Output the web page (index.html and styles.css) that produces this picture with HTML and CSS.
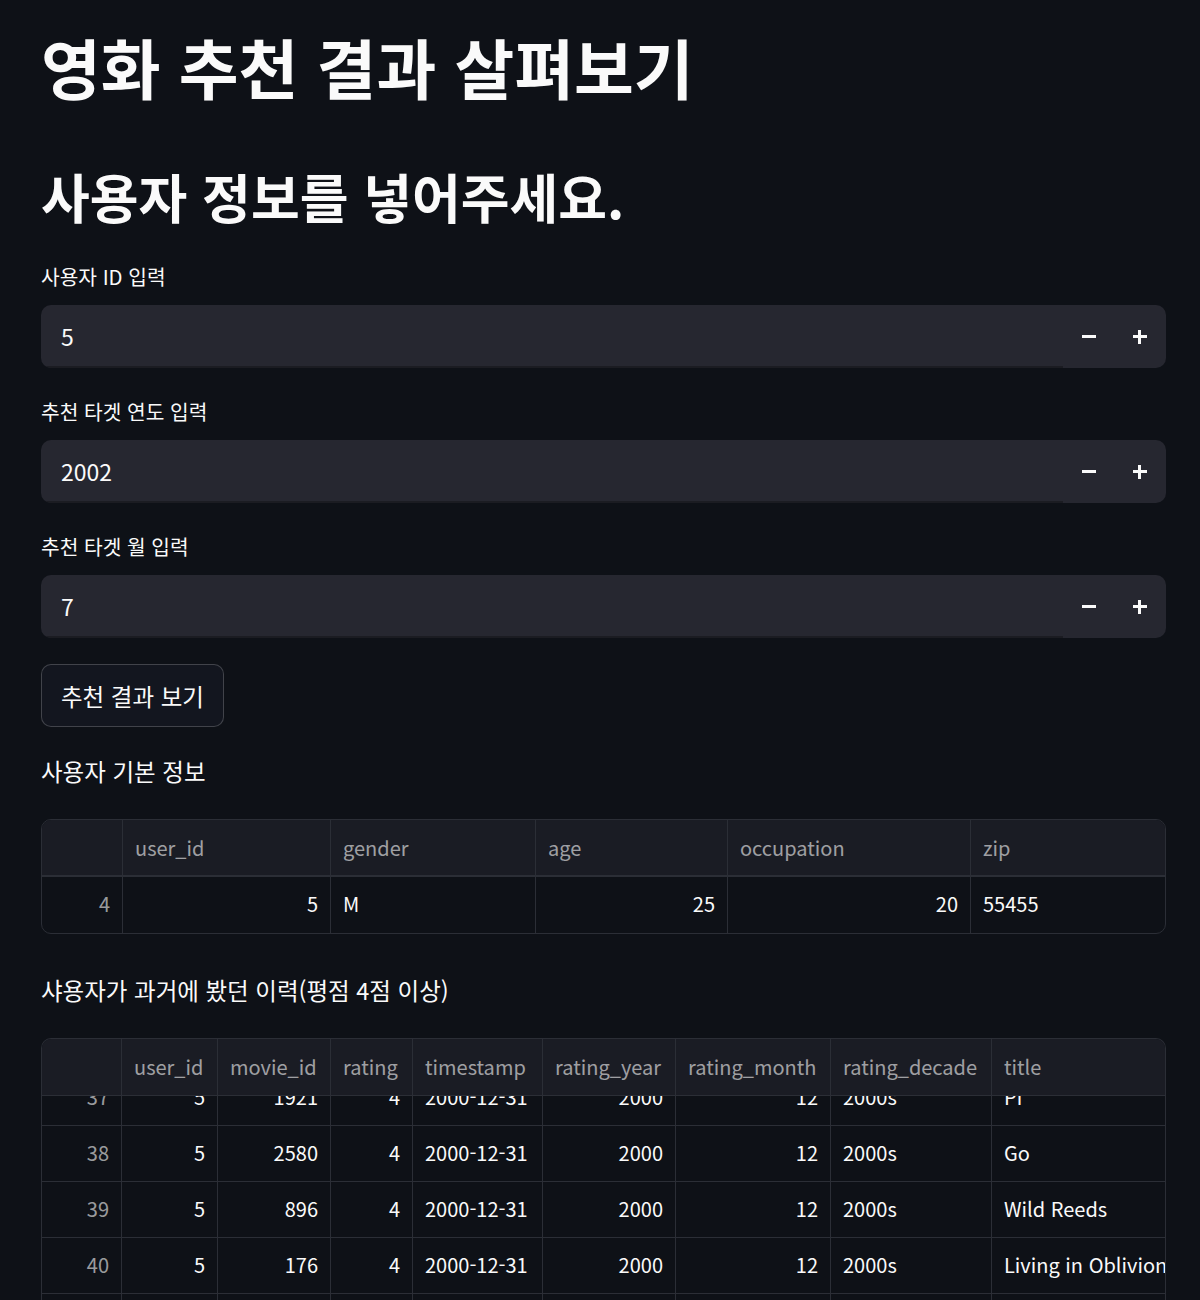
FILE: index.html
```html
<!DOCTYPE html>
<html lang="ko">
<head>
<meta charset="utf-8">
<title>영화 추천 결과 살펴보기</title>
<link rel="stylesheet" href="styles.css">
</head>
<body>
<main class="main">
  <h1 class="title">영화 추천 결과 살펴보기</h1>
  <h2 class="subtitle">사용자 정보를 넣어주세요.</h2>

  <div class="field">
    <label class="label">사용자 ID 입력</label>
    <div class="numinput">
      <div class="numinput-value">5</div>
      <div class="numinput-btn"><span class="minus"></span></div>
      <div class="numinput-btn"><span class="plus"></span></div>
    </div>
  </div>

  <div class="field">
    <label class="label">추천 타겟 연도 입력</label>
    <div class="numinput">
      <div class="numinput-value">2002</div>
      <div class="numinput-btn"><span class="minus"></span></div>
      <div class="numinput-btn"><span class="plus"></span></div>
    </div>
  </div>

  <div class="field">
    <label class="label">추천 타겟 월 입력</label>
    <div class="numinput">
      <div class="numinput-value">7</div>
      <div class="numinput-btn"><span class="minus"></span></div>
      <div class="numinput-btn"><span class="plus"></span></div>
    </div>
  </div>

  <button class="btn">추천 결과 보기</button>

  <p class="section">사용자 기본 정보</p>

  <div class="df df-user">
    <div class="df-row df-head">
      <div class="c idx"></div>
      <div class="c">user_id</div>
      <div class="c">gender</div>
      <div class="c">age</div>
      <div class="c">occupation</div>
      <div class="c">zip</div>
    </div>
    <div class="df-row">
      <div class="c idx num">4</div>
      <div class="c num">5</div>
      <div class="c">M</div>
      <div class="c num">25</div>
      <div class="c num">20</div>
      <div class="c">55455</div>
    </div>
  </div>

  <p class="section section-2">샤용자가 과거에 봤던 이력(평점 4점 이상)</p>

  <div class="df df-hist">
    <div class="df-row df-head">
      <div class="c idx"></div>
      <div class="c">user_id</div>
      <div class="c">movie_id</div>
      <div class="c">rating</div>
      <div class="c">timestamp</div>
      <div class="c">rating_year</div>
      <div class="c">rating_month</div>
      <div class="c">rating_decade</div>
      <div class="c">title</div>
    </div>
    <div class="df-body">
      <div class="df-rows">
        <div class="df-row">
          <div class="c idx num">37</div><div class="c num">5</div><div class="c num">1921</div><div class="c num">4</div><div class="c">2000-12-31</div><div class="c num">2000</div><div class="c num">12</div><div class="c">2000s</div><div class="c">Pi</div>
        </div>
        <div class="df-row">
          <div class="c idx num">38</div><div class="c num">5</div><div class="c num">2580</div><div class="c num">4</div><div class="c">2000-12-31</div><div class="c num">2000</div><div class="c num">12</div><div class="c">2000s</div><div class="c">Go</div>
        </div>
        <div class="df-row">
          <div class="c idx num">39</div><div class="c num">5</div><div class="c num">896</div><div class="c num">4</div><div class="c">2000-12-31</div><div class="c num">2000</div><div class="c num">12</div><div class="c">2000s</div><div class="c">Wild Reeds</div>
        </div>
        <div class="df-row">
          <div class="c idx num">40</div><div class="c num">5</div><div class="c num">176</div><div class="c num">4</div><div class="c">2000-12-31</div><div class="c num">2000</div><div class="c num">12</div><div class="c">2000s</div><div class="c">Living in Oblivion</div>
        </div>
        <div class="df-row">
          <div class="c idx num">41</div><div class="c num">5</div><div class="c num">1</div><div class="c num">4</div><div class="c">2000-12-31</div><div class="c num">2000</div><div class="c num">12</div><div class="c">2000s</div><div class="c">Toy Story</div>
        </div>
      </div>
    </div>
  </div>
</main>
</body>
</html>
```

FILE: styles.css
```css
* { box-sizing: border-box; }

html, body {
  margin: 0;
  padding: 0;
  background: #0e1117;
  color: #fafafa;
  font-family: "Noto Sans CJK KR", "Noto Sans", sans-serif;
  height: 1300px;
  overflow: hidden;
}

.main {
  width: 1200px;
  padding: 0 34px 0 41px;
}

.title {
  margin: 0;
  padding-top: 27px;
  font-size: 65px;
  font-weight: 700;
  line-height: 78px;
  height: 78px;
  box-sizing: content-box;
}

.subtitle {
  margin: 0;
  padding-top: 59px;
  font-size: 53px;
  font-weight: 700;
  line-height: 64px;
  height: 64px;
  box-sizing: content-box;
}

.field {
  margin-top: 33px;
}
.field + .field { margin-top: 28px; }

.label {
  display: block;
  font-size: 20.3px;
  line-height: 30px;
  height: 30px;
  margin-bottom: 14px;
}

.numinput {
  display: flex;
  align-items: center;
  height: 63px;
  background: #262730;
  border-radius: 10px;
  overflow: hidden;
}

.numinput-value {
  flex: 1;
  height: 100%;
  display: flex;
  align-items: center;
  padding-left: 20px;
  font-size: 23px;
  border-bottom: 2px solid #1b1c22;
}

.numinput-btn {
  width: 51px;
  height: 100%;
  display: flex;
  align-items: center;
  justify-content: center;
}
.numinput-btn:last-child { margin-right: 1px; }

.minus, .plus {
  display: block;
  width: 14px;
  height: 3px;
  background: #fafafa;
  position: relative;
}
.plus::after {
  content: "";
  position: absolute;
  left: 5.5px;
  top: -5.5px;
  width: 3px;
  height: 14px;
  background: #fafafa;
}

.btn {
  display: block;
  margin-top: 26px;
  height: 63px;
  padding: 0 19px;
  background: #13161f;
  color: #fafafa;
  border: 1px solid rgba(250, 250, 250, 0.2);
  border-radius: 10px;
  font-family: inherit;
  font-size: 23.5px;
}

.section {
  margin: 27px 0 0;
  font-size: 23.5px;
  line-height: 34px;
  height: 34px;
}
.section-2 { margin-top: 39px; }

.df {
  margin-top: 31px;
  border: 1px solid #2b2e36;
  border-radius: 10px;
  overflow: hidden;
  font-size: 20px;
}
.df-hist {
  height: 320px;
  border-bottom: none;
  border-radius: 10px 10px 0 0;
}

.df-row {
  display: grid;
  height: 56px;
  border-bottom: 1px solid #2b2e36;
}
.df-row:last-child { border-bottom: none; }

.df-user .df-row { grid-template-columns: 81px 208px 205px 192px 243px 1fr; }
.df-hist .df-row { grid-template-columns: 80px 96px 113px 82px 130px 133px 155px 161px 1fr; }

.df-head {
  height: 57px;
  background: #1a1c24;
  color: rgba(250, 250, 250, 0.6);
  position: relative;
  z-index: 1;
}
.df-user .df-head { border-bottom: 2px solid #2b2e36; }
.df-hist .df-head { border-bottom: 1px solid #2b2e36; }

.c {
  display: flex;
  align-items: center;
  padding: 0 12px 3px;
  border-right: 1px solid #2b2e36;
  white-space: nowrap;
  overflow: hidden;
}
.df-head .c { padding-bottom: 1px; }
.c:last-child { border-right: none; }
.num { justify-content: flex-end; }
.idx { color: rgba(250, 250, 250, 0.6); }
.df-head .idx { color: transparent; }

.df-body {
  height: 262px;
  overflow: hidden;
}
.df-rows {
  margin-top: -26px;
  background: #0e1117;
}
.df-hist .df-rows .df-row { border-bottom: 1px solid #2b2e36; }
```
